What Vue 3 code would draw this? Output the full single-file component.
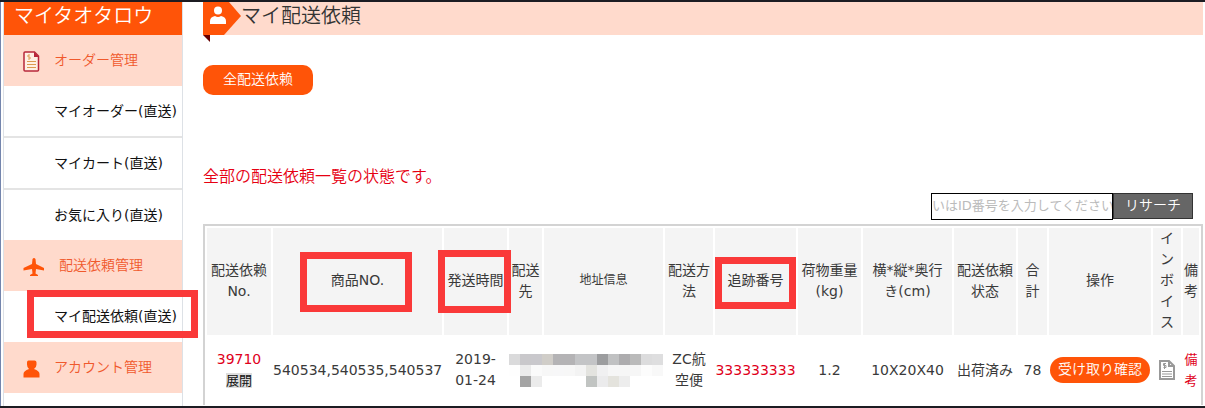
<script setup>
import { ref } from 'vue'

const keyword = ref('')

const menu = [
  { title: 'オーダー管理', icon: 'order', items: [{ label: 'マイオーダー(直送)' }, { label: 'マイカート(直送)' }, { label: 'お気に入り(直送)' }] },
  { title: '配送依頼管理', icon: 'plane', items: [{ label: 'マイ配送依頼(直送)', marked: true }] },
  { title: 'アカウント管理', icon: 'account', items: [] },
]

const columns = [
  { key: 'no', label: '配送依赖\nNo.' },
  { key: 'goods', label: '商品NO.', mark: 'mark-goods' },
  { key: 'time', label: '発送時間', mark: 'mark-time' },
  { key: 'dest', label: '配送\n先' },
  { key: 'address', label: '地址信息' },
  { key: 'method', label: '配送方\n法' },
  { key: 'track', label: '追跡番号', mark: 'mark-track' },
  { key: 'weight', label: '荷物重量\n(kg)' },
  { key: 'size', label: '横*縦*奥行\nき(cm)' },
  { key: 'state', label: '配送依頼\n状态' },
  { key: 'total', label: '合\n計' },
  { key: 'action', label: '操作' },
  { key: 'invoice', label: 'イ\nン\nボ\nイ\nス' },
  { key: 'note', label: '備\n考' },
]

const mosaic = [
  ['#dadadb', '#c9c8cb', '#c9c8cc', '#d0cdc8', '#b4b3b5', '#b4b3b5', '#c3c4c6', '#c3c4c6', '#9c9d9f', '#c0c1c2', '#adacae', '#bababa', '#dcdcdd', '#dededf'],
  ['#fefefe', '#ebebeb', '#fafafa', '#f7f7f7', '#f7f7f8', '#f7f7f7', '#f3f3f3', '#e3e3df', '#f0f0f1', '#f6f6f6', '#f6f6f6', '#f6f6f6', '#fcfcfc', '#f8f8f8'],
  ['#ffffff', '#a4a4a4', '#ebebeb', '#ffffff', '#ffffff', '#ffffff', '#ffffff', '#c1c4c2', '#ebebec', '#e4e3dd', '#ededed', '#ffffff', '#ffffff', '#ffffff'],
]
</script>

<template>
  <div class="page">
    <aside class="sidebar">
      <h2 class="brand">マイタオタロウ</h2>
      <nav>
        <section v-for="group in menu" :key="group.title">
          <h3 class="group">
            <svg v-if="group.icon === 'order'" class="icon" width="24" height="24" viewBox="0 0 24 24">
              <path d="M5 3h9.500l4 4v14q0 1-1 1H5q-1 0-1-1V4q0-1 1-1z" fill="#fff0e4" stroke="#b8273a" stroke-width="1.500" />
              <path d="M14 3v5h5z" fill="#b8273a" />
              <path d="M10 6H8v2h2v2H8M7 12.500h9M7 15.500h9M7 18.500h9" fill="none" stroke="#dc9a50" />
            </svg>
            <svg v-else-if="group.icon === 'plane'" class="icon" width="24" height="24" viewBox="0 0 24 24">
              <path d="M12.500 5Q14 3 15.500 5L16 10l8 4v2.500L16 15l-.5 4.500L18 21v1h-8v-1l2.500-1.500L12 15l-8.500 1.500V14l8.500-4z" fill="#ff5408" />
            </svg>
            <svg v-else class="icon" width="24" height="24" viewBox="0 0 24 24">
              <path d="M8.500 4.500h6q2 0 2 2v2q0 3-2.500 4.500 5.500 2 5.500 5V21.500h-16V18q0-3 5.500-5Q7 11.500 7 8.500v-2q0-2 1.500-2z" fill="#ff5408" />
            </svg>
            <span :class="{ wide: group.icon === 'plane' }">{{ group.title }}</span>
          </h3>
          <ul>
            <li v-for="item in group.items" :key="item.label">
              <a href="#">{{ item.label }}</a>
              <i v-if="item.marked" class="mark mark-menu"></i>
            </li>
          </ul>
        </section>
      </nav>
    </aside>

    <main class="content">
      <header class="banner">
        <svg class="flag" width="38" height="40" viewBox="0 0 38 40">
          <path d="M0 0h26l12 14-17 19H0z" fill="#ff5408" />
          <path d="M0 33h7v7z" fill="#670000" />
          <ellipse cx="15" cy="8.500" rx="4" ry="4" fill="#fff" />
          <path d="M7 22v-3q0-4 5-5 3 2 6 0 5 1 5 5v3z" fill="#fff" />
        </svg>
        <h1>マイ配送依頼</h1>
      </header>

      <button class="all" type="button">全配送依赖</button>
      <p class="status">全部の配送依頼一覧の状態です。</p>

      <form class="search" @submit.prevent>
        <input v-model="keyword" type="text" aria-label="ID番号" placeholder="いはID番号を入力してください" />
        <button type="submit">リサーチ</button>
      </form>

      <table>
        <colgroup>
          <col v-for="c in columns" :key="c.key" :class="'col-' + c.key" />
        </colgroup>
        <thead>
          <tr>
            <th v-for="c in columns" :key="c.key" :class="'head-' + c.key">{{ c.label }}<i v-if="c.mark" class="mark" :class="c.mark"></i></th>
          </tr>
        </thead>
        <tbody>
          <tr>
            <td><a class="red" href="#">39710</a><br /><a class="expand" href="#">展開</a></td>
            <td class="single">540534,540535,540537</td>
            <td>2019-<br />01-24</td>
            <td colspan="2">
              <svg class="mosaic" width="154" height="33" viewBox="0 0 154 33" shape-rendering="crispEdges">
                <g v-for="(line, y) in mosaic" :key="y">
                  <rect v-for="(color, x) in line" :key="x" :x="x * 11" :y="y * 11" width="11" height="11" :fill="color" />
                </g>
              </svg>
            </td>
            <td>ZC航<br />空便</td>
            <td><a class="red" href="#">333333333</a></td>
            <td>1.2</td>
            <td>10X20X40</td>
            <td>出荷済み</td>
            <td>78</td>
            <td><button class="confirm" type="button">受け取り確認</button></td>
            <td>
              <a class="invoice" href="#" aria-label="インボイス">
                <svg width="16" height="20" viewBox="0 0 16 20">
                  <path d="M1 1h9l5 5v13H1z" fill="#fff" stroke="#999" stroke-width="2" />
                  <path d="M10 1v5h5" fill="none" stroke="#999" stroke-width="2" />
                  <path d="M7 3.500H4.500v2H7v2H4.500M5.500 3v6M3 11.500h10M3 14h10M3 16.500h10" fill="none" stroke="#999" />
                </svg>
              </a>
            </td>
            <td><a class="red note" href="#">備<br />考</a></td>
          </tr>
        </tbody>
      </table>
    </main>
  </div>
</template>

<style>
body {
  margin: 0;
  background: #fff;
}
</style>

<style scoped>
.page {
  box-sizing: border-box;
  display: flex;
  min-height: 100vh;
  padding: 0 2px 0 3px;
  border: solid #1c1c22;
  border-width: 2px 0;
  box-shadow: inset 1px 0 #7485ad;
  font: 14px/21px "DejaVu Sans", "Noto Sans CJK JP", sans-serif;
  color: #3a3a3a;
}

h1, h2, h3, p, ul {
  margin: 0;
  padding: 0;
  font-weight: 350;
}

a {
  color: inherit;
  text-decoration: none;
}

button, input {
  box-sizing: border-box;
  margin: 0;
  font: inherit;
}

.sidebar {
  box-sizing: border-box;
  flex: none;
  width: 180px;
  border: solid #dde1e6;
  border-width: 0 1px;
}

.brand {
  height: 33px;
  padding-left: 10px;
  background: #ff5408;
  color: #fff;
  font-size: 20px;
  line-height: 28px;
}

.group {
  display: flex;
  align-items: center;
  height: 51px;
  padding-left: 16px;
  background: #ffdacc;
  color: #f0592c;
  font-size: 14px;
}

.icon {
  flex: none;
  width: 24px;
  margin-right: 10px;
}

.wide {
  padding-left: 5px;
}

ul {
  list-style: none;
}

li {
  position: relative;
  height: 50px;
  padding-left: 50px;
  color: #111;
  font-weight: normal;
  line-height: 50px;
  white-space: nowrap;
}

li:only-child {
  height: 51px;
}

li + li {
  border-top: 2px solid #e4e4e4;
}

.mark {
  box-sizing: border-box;
  position: absolute;
  z-index: 1;
  border: 7px solid #fa3939;
  pointer-events: none;
}

.mark-menu {
  top: -1px;
  left: 23px;
  width: 171px;
  height: 48px;
}

.mark-goods {
  top: 24px;
  left: 27px;
  width: 112px;
  height: 60px;
}

.mark-time {
  top: 22px;
  left: -6px;
  width: 73px;
  height: 63px;
}

.mark-track {
  top: 29px;
  left: 0;
  width: 81px;
  height: 52px;
}

.content {
  flex: 1;
  min-width: 0;
  padding-left: 20px;
}

.banner {
  display: flex;
  height: 33px;
  background: #ffdacc;
}

.flag {
  flex: none;
  overflow: visible;
}

h1 {
  color: #333;
  font-size: 20px;
  line-height: 28px;
}

.all {
  display: block;
  width: 110px;
  height: 30px;
  margin-top: 30px;
  padding: 0 0 2px;
  border: 0;
  border-radius: 10px;
  background: #ff5408;
  color: #fff;
  font-weight: 350;
}

.status {
  margin-top: 70px;
  color: #e60012;
  font-size: 16px;
  line-height: 24px;
}

.search {
  display: flex;
  justify-content: flex-end;
  align-items: flex-start;
  margin: 4px 10px 4px 0;
}

.search input {
  width: 182px;
  height: 27px;
  padding: 0 0 2px;
  border: 1px solid #000;
  background: #fff;
  font-size: 13px;
}

.search input::placeholder {
  color: #bbb;
}

.search button {
  width: 80px;
  height: 26px;
  padding: 0 0 2px;
  border: 1px solid #333;
  background: #666;
  color: #fff;
  font-weight: 350;
}

table {
  width: 100%;
  border: 2px solid #d3d3d3;
  border-bottom: 0;
  border-spacing: 2px;
  table-layout: fixed;
  text-align: center;
}

.col-no { width: 64px; }
.col-goods { width: 169px; }
.col-time { width: 63px; }
.col-dest { width: 33px; }
.col-address { width: 119px; }
.col-method { width: 48px; }
.col-track { width: 81px; }
.col-weight { width: 63px; }
.col-size { width: 89px; }
.col-state { width: 62px; }
.col-total { width: 29px; }
.col-action { width: 102px; }
.col-invoice { width: 28px; }
.col-note { width: 16px; }

th {
  position: relative;
  padding: 0 0 2px;
  background: #f4f4f4;
  font-weight: normal;
  white-space: pre-line;
}

.head-address {
  font-size: 12px;
}

td {
  height: 66px;
  padding: 0;
}

.single {
  white-space: nowrap;
}

.red {
  color: #e0001b;
}

.note {
  font-size: 13px;
}

.expand {
  background: #ddd;
  color: #111;
  font-size: 13px;
}

.mosaic {
  display: block;
}

.confirm {
  display: block;
  width: 100px;
  height: 26px;
  margin: 0 auto;
  padding: 0 0 2px;
  border: 0;
  border-radius: 13px;
  background: #ff5408;
  color: #fff;
  font-weight: 350;
  white-space: nowrap;
}

.invoice svg {
  display: block;
  margin: 0 auto;
}
</style>
